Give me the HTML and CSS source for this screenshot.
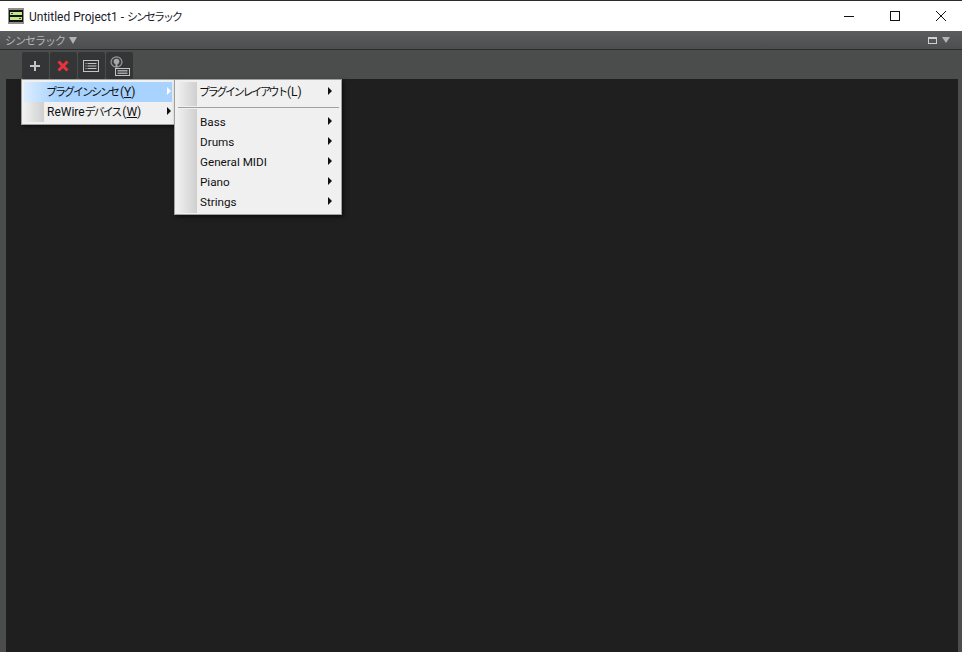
FILE: index.html
```html
<!DOCTYPE html>
<html lang="ja">
<head>
<meta charset="utf-8">
<title>Untitled Project1 - シンセラック</title>
<link rel="stylesheet" href="styles.css">
</head>
<body>
<div class="window">
  <header class="titlebar">
    <svg class="app-icon" width="16" height="16" viewBox="0 0 16 16">
      <rect width="16" height="16" fill="#8f8f8f"/>
      <rect x="1" y="2" width="14" height="12" fill="#141414"/>
      <rect x="2" y="4" width="12" height="3" fill="#c3e88a"/>
      <rect x="2" y="9" width="12" height="3" fill="#c3e88a"/>
      <rect x="3" y="5" width="2" height="1" fill="#3c4a20"/>
      <rect x="11" y="10" width="2" height="1" fill="#3c4a20"/>
    </svg>
    <span class="title-text">Untitled Project1 - <span class="jp">シンセラック</span></span>
    <div class="win-controls">
      <svg class="win-btn" width="46" height="30" viewBox="0 0 46 30"><path d="M18 15.5h10" stroke="#111" fill="none"/></svg>
      <svg class="win-btn" width="46" height="30" viewBox="0 0 46 30"><rect x="18.5" y="10.5" width="9" height="9" stroke="#111" fill="none"/></svg>
      <svg class="win-btn" width="46" height="30" viewBox="0 0 46 30"><path d="M18 10l10 10M28 10l-10 10" stroke="#111" fill="none"/></svg>
    </div>
  </header>
  <div class="panel-head">
    <span class="panel-title">シンセラック</span>
    <span class="tri-down"></span>
    <div class="panel-right">
      <span class="float-icon"></span>
      <span class="tri-down small"></span>
    </div>
  </div>
  <div class="toolbar">
    <button class="tool">
      <svg width="14" height="14" viewBox="0 0 14 14"><path d="M7 2v10M2 7h10" stroke="#c4c4c4" stroke-width="2" fill="none"/></svg>
    </button>
    <button class="tool">
      <svg width="14" height="14" viewBox="0 0 14 14"><path d="M2.5 2.5l9 9M11.5 2.5l-9 9" stroke="#e8323c" stroke-width="3" fill="none"/></svg>
    </button>
    <button class="tool">
      <svg width="18" height="14" viewBox="0 0 18 14"><rect x="1.500" y="1.500" width="15" height="11" stroke="#c4c4c4" fill="none"/><path d="M3.500 4.500h1M5.500 4.500h9M3.500 7h1M5.500 7h9M3.500 9.500h1M5.500 9.500h9" stroke="#c4c4c4" fill="none"/></svg>
    </button>
    <button class="tool">
      <svg width="22" height="24" viewBox="0 0 22 24"><ellipse cx="8.500" cy="8" rx="5.500" ry="5.200" fill="#3e3e3e" stroke="#9a9a9a" stroke-width="1.200"/><circle cx="8.500" cy="7.500" r="2.800" fill="#a8a8a8"/><path d="M8.500 8v5" stroke="#a8a8a8" stroke-width="2" fill="none"/><rect x="7.500" y="14.500" width="14" height="7" fill="#333536" stroke="#c4c4c4"/><path d="M9.500 16.500h10M9.500 18h10M9.500 19.500h10" stroke="#c4c4c4" stroke-width=".8" fill="none"/></svg>
    </button>
  </div>
  <main class="rack"></main>

  <nav class="menu menu-main">
    <div class="menu-item active"><span class="gutter"></span><span class="label"><span class="jp">プラグインシンセ</span>(<u>Y</u>)</span><span class="arrow"></span></div>
    <div class="menu-item"><span class="gutter"></span><span class="label rewire">ReWire<span class="jp">デバイス</span>(<u>W</u>)</span><span class="arrow"></span></div>
  </nav>
  <nav class="menu menu-sub">
    <div class="sub-item sub-top"><span class="gutter"></span><span class="label"><span class="jp">プラグインレイアウト</span>(L)</span><span class="arrow"></span></div>
    <div class="menu-sep"></div>
    <div class="sub-group">
      <div class="sub-item"><span class="label">Bass</span><span class="arrow"></span></div>
      <div class="sub-item"><span class="label">Drums</span><span class="arrow"></span></div>
      <div class="sub-item"><span class="label">General MIDI</span><span class="arrow"></span></div>
      <div class="sub-item"><span class="label">Piano</span><span class="arrow"></span></div>
      <div class="sub-item"><span class="label">Strings</span><span class="arrow"></span></div>
    </div>
  </nav>
</div>
</body>
</html>
```
FILE: styles.css
```css
* { box-sizing: border-box; }
html, body { margin: 0; height: 100%; overflow: hidden; }
body { font-family: Roboto, "Noto Sans CJK JP", sans-serif; font-size: 12px; color: #111; }
.jp { font-family: "Noto Sans CJK JP", sans-serif; font-size: 11px; letter-spacing: -2px; margin-right: 2px; }
.window { position: relative; width: 962px; height: 652px; display: flex; flex-direction: column; background: #4b4d4d; }
.titlebar { flex: 0 0 31px; display: flex; align-items: center; background: #fff; border-top: 1px solid #2b2b2b; padding-left: 8px; }
.app-icon { margin-right: 5px; }
.title-text { font-size: 12px; color: #1a1a2a; }
.win-controls { margin-left: auto; display: flex; margin-right: -2px; }
.win-btn { display: block; }
.panel-head { flex: 0 0 19px; display: flex; align-items: center; padding: 0 12px 0 5px; background: linear-gradient(#5a5c5e, #4c4e50); border-bottom: 1px solid #2c2c2c; color: #b4b4b4; }
.panel-title { margin-right: 4px; font-family: "Noto Sans CJK JP", sans-serif; font-size: 11px; letter-spacing: -1px; }
.tri-down { width: 0; height: 0; border-left: 4px solid transparent; border-right: 4px solid transparent; border-top: 7px solid #b4b4b4; }
.tri-down.small { border-top-width: 6px; }
.panel-right { margin-left: auto; display: flex; align-items: center; gap: 5px; }
.float-icon { width: 9px; height: 7px; border: 1px solid #d0d0d0; border-top-width: 2px; }
.toolbar { flex: 0 0 29px; display: flex; gap: 1px; padding: 2px 0 0 22px; background: #4b4d4d; }
.tool { width: 27px; height: 27px; padding: 0 2px 0 0; border: 0; border-radius: 2px; background: #333536; display: flex; align-items: center; justify-content: center; }
.rack { flex: 1; margin: 0 4px 0 6px; background: #1f1f1f; }
.menu { position: absolute; background: #f0f0f0; border: 1px solid #a0a0a0; box-shadow: 2px 2px 4px rgba(0,0,0,.55); color: #111; padding: 2px; }
.menu-main { left: 21px; top: 79px; width: 154px; height: 46px; }
.menu-sub { left: 174px; top: 79px; width: 168px; height: 136px; }
.menu-item { position: relative; height: 20px; display: flex; align-items: center; }
.gutter { width: 20px; align-self: stretch; background: linear-gradient(90deg, #f0f0f0, #cfcfcf); }
.menu-item .label { margin: -2px 0 0 2px; }
.menu-item .label.rewire { margin-left: 3px; }
.menu-item.active { background: linear-gradient(90deg, #dcedff, #a8d3ff 22%); }
.menu-item.active .gutter { background: none; }
.sub-top .label { margin-top: -6px; margin-left: 2px; }
.sub-top .jp { letter-spacing: -2.3px; margin-right: 1px; }
.sub-group { padding: 3px 0 1px; background: linear-gradient(90deg, #f0f0f0, #cfcfcf) left / 20px 100% no-repeat; }
.sub-item { position: relative; height: 20px; display: flex; align-items: center; }
.sub-item.sub-top { height: 24px; }
.sub-group .label { margin-left: 23px; font-size: 11.7px; }
.menu-sep { height: 3px; margin-left: 1px; padding-top: 1px; background: #f0f0f0; position: relative; }
.menu-sep::after { content: ""; display: block; height: 1px; background: #a0a0a0; }
.arrow { position: absolute; right: 1px; top: 50%; margin-top: -5px; width: 0; height: 0; border-top: 4px solid transparent; border-bottom: 4px solid transparent; border-left: 4px solid #111; }
.menu-item.active .arrow { border-left-color: #fff; }
.sub-item .arrow { right: 7px; }
.sub-top .arrow { margin-top: -7px; }
```
